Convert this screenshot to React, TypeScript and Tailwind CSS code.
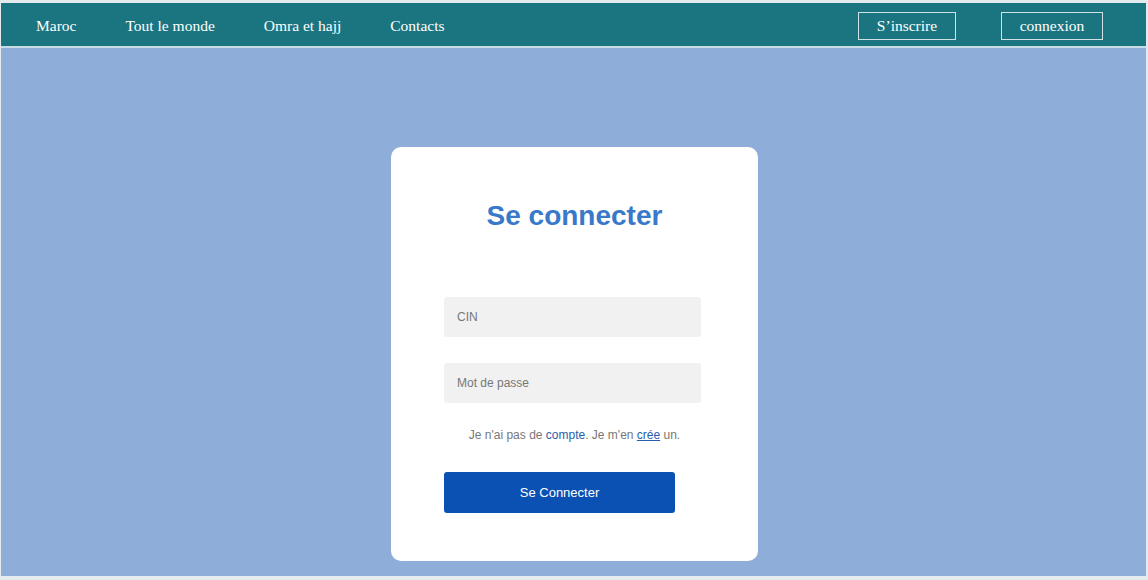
const navLinks = ["Maroc", "Tout le monde", "Omra et hajj", "Contacts"];

function Navbar() {
    return (
        <nav className="flex h-[45px] items-center justify-between bg-[#1b7581] pt-[3px] pl-[35px] pr-[43px] font-['Liberation_Serif',serif] text-[15.5px] text-white border-b-2 border-[#c9dbe4]">
            <div className="flex items-center gap-[49px]">
                {navLinks.map((l) => (
                    <a key={l} className="cursor-pointer">
                        {l}
                    </a>
                ))}
            </div>
            <div className="flex items-center gap-[45px]">
                <button className="h-[28px] w-[98px] border border-[#cfe3e6] text-white">S’inscrire</button>
                <button className="h-[28px] w-[102px] border border-[#cfe3e6] text-white">connexion</button>
            </div>
        </nav>
    );
}

function LoginCard() {
    return (
        <div className="flex w-[367px] flex-col rounded-[10px] bg-white px-[53px] pt-[53px] pb-[48px] font-['Liberation_Sans',Arial,sans-serif]">
            <h1 className="text-center text-[28px] leading-[32px] font-bold text-[#3879c9]">Se connecter</h1>
            <input
                placeholder="CIN"
                className="mt-[65px] h-[40px] w-[257px] rounded-[3px] bg-[#f1f1f1] px-[13px] text-[12px] outline-none placeholder:text-[#777]"
            />
            <input
                type="password"
                placeholder="Mot de passe"
                className="mt-[26px] h-[40px] w-[257px] rounded-[3px] bg-[#f1f1f1] px-[13px] text-[12px] outline-none placeholder:text-[#777]"
            />
            <p className="mt-[24px] text-center text-[12px] leading-[16px] text-[#777]">
                Je n'ai pas de <a className="text-[#2a5cae]">compte</a>. Je m'en{" "}
                <a className="text-[#2a5cae] underline">crée</a> un.
            </p>
            <button className="mt-[29px] h-[41px] w-[231px] rounded-[3px] bg-[#0b51b3] text-[13px] text-white">
                Se Connecter
            </button>
        </div>
    );
}

export default function App() {
    return (
        <div className="flex h-[580px] w-[1148px] flex-col bg-[#e4eaee] pt-[3px] pl-px pr-[2px] pb-[4px]">
            <Navbar />
            <main className="flex flex-1 justify-center bg-[#8fadd9] pt-[99px] pl-[2px]">
                <div className="h-fit">
                    <LoginCard />
                </div>
            </main>
        </div>
    );
}
